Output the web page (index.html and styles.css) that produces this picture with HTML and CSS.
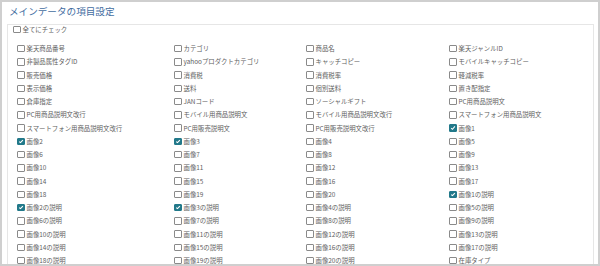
FILE: index.html
```html
<!DOCTYPE html>
<html lang="ja">
<head>
  <meta charset="UTF-8">
  <meta name="viewport" content="width=device-width, initial-scale=1.0">
  <title>メインデータの項目設定</title>
  <link rel="stylesheet" href="styles.css">
</head>
<body>
  <div class="frame">
    <h2 class="frame-title">メインデータの項目設定</h2>
    <div class="field-box">
      <label class="check-all"><input type="checkbox">全てにチェック</label>
      <div class="field-grid">
        <label><input type="checkbox">楽天商品番号</label>
        <label><input type="checkbox">カテゴリ</label>
        <label><input type="checkbox">商品名</label>
        <label><input type="checkbox">楽天ジャンルID</label>

        <label><input type="checkbox">非製品属性タグID</label>
        <label><input type="checkbox">yahooプロダクトカテゴリ</label>
        <label><input type="checkbox">キャッチコピー</label>
        <label><input type="checkbox">モバイルキャッチコピー</label>

        <label><input type="checkbox">販売価格</label>
        <label><input type="checkbox">消費税</label>
        <label><input type="checkbox">消費税率</label>
        <label><input type="checkbox">軽減税率</label>

        <label><input type="checkbox">表示価格</label>
        <label><input type="checkbox">送料</label>
        <label><input type="checkbox">個別送料</label>
        <label><input type="checkbox">置き配指定</label>

        <label><input type="checkbox">倉庫指定</label>
        <label><input type="checkbox">JANコード</label>
        <label><input type="checkbox">ソーシャルギフト</label>
        <label><input type="checkbox">PC用商品説明文</label>

        <label><input type="checkbox">PC用商品説明文改行</label>
        <label><input type="checkbox">モバイル用商品説明文</label>
        <label><input type="checkbox">モバイル用商品説明文改行</label>
        <label><input type="checkbox">スマートフォン用商品説明文</label>

        <label><input type="checkbox">スマートフォン用商品説明文改行</label>
        <label><input type="checkbox">PC用販売説明文</label>
        <label><input type="checkbox">PC用販売説明文改行</label>
        <label><input type="checkbox" checked>画像1</label>

        <label><input type="checkbox" checked>画像2</label>
        <label><input type="checkbox" checked>画像3</label>
        <label><input type="checkbox">画像4</label>
        <label><input type="checkbox">画像5</label>

        <label><input type="checkbox">画像6</label>
        <label><input type="checkbox">画像7</label>
        <label><input type="checkbox">画像8</label>
        <label><input type="checkbox">画像9</label>

        <label><input type="checkbox">画像10</label>
        <label><input type="checkbox">画像11</label>
        <label><input type="checkbox">画像12</label>
        <label><input type="checkbox">画像13</label>

        <label><input type="checkbox">画像14</label>
        <label><input type="checkbox">画像15</label>
        <label><input type="checkbox">画像16</label>
        <label><input type="checkbox">画像17</label>

        <label><input type="checkbox">画像18</label>
        <label><input type="checkbox">画像19</label>
        <label><input type="checkbox">画像20</label>
        <label><input type="checkbox" checked>画像1の説明</label>

        <label><input type="checkbox" checked>画像2の説明</label>
        <label><input type="checkbox" checked>画像3の説明</label>
        <label><input type="checkbox">画像4の説明</label>
        <label><input type="checkbox">画像5の説明</label>

        <label><input type="checkbox">画像6の説明</label>
        <label><input type="checkbox">画像7の説明</label>
        <label><input type="checkbox">画像8の説明</label>
        <label><input type="checkbox">画像9の説明</label>

        <label><input type="checkbox">画像10の説明</label>
        <label><input type="checkbox">画像11の説明</label>
        <label><input type="checkbox">画像12の説明</label>
        <label><input type="checkbox">画像13の説明</label>

        <label><input type="checkbox">画像14の説明</label>
        <label><input type="checkbox">画像15の説明</label>
        <label><input type="checkbox">画像16の説明</label>
        <label><input type="checkbox">画像17の説明</label>

        <label><input type="checkbox">画像18の説明</label>
        <label><input type="checkbox">画像19の説明</label>
        <label><input type="checkbox">画像20の説明</label>
        <label><input type="checkbox">在庫タイプ</label>
      </div>
    </div>
  </div>
</body>
</html>
```

FILE: styles.css
```css
body {
  margin: 0;
  padding: 0;
  background-color: #fff;
  font-family: "Noto Sans CJK JP", "Noto Sans", sans-serif;
}

.frame {
  box-sizing: border-box;
  height: 266px;
  border: 2px solid #cfcfcf;
  overflow: hidden;
}

.frame-title {
  margin: 0;
  padding: 2px 0 0 7px;
  height: 20px;
  font-size: 9.6px;
  font-weight: normal;
  line-height: 14px;
  color: #436d9f;
}

.field-box {
  margin: 0 4px 0 5px;
  padding: 0 5px 0 5px;
  border: 1px solid #e6e6e6;
  border-bottom: none;
  height: 300px;
}

label {
  display: flex;
  align-items: center;
  font-size: 6.4px;
  color: #5e5e5e;
  white-space: nowrap;
}

.check-all {
  height: 9px;
}

.field-grid {
  display: grid;
  grid-template-columns: 157px 132px 143px 1fr;
  grid-auto-rows: 13.25px;
  margin-top: 8px;
  padding-left: 4px;
}

input[type="checkbox"] {
  appearance: none;
  box-sizing: border-box;
  width: 7.5px;
  height: 7.5px;
  margin: 0 2px 0 0;
  border: 1px solid #8a8a8a;
  border-radius: 1px;
  background-color: #fff;
  flex-shrink: 0;
}

input[type="checkbox"]:checked {
  border-color: #22798a;
  background-color: #22798a;
  background-image: url("data:image/svg+xml;utf8,<svg xmlns='http://www.w3.org/2000/svg' viewBox='0 0 8 8'><path d='M1.5 4.2 L3.3 5.8 L6.5 1.8' fill='none' stroke='white' stroke-width='1.4'/></svg>");
  background-size: 100% 100%;
}
```
